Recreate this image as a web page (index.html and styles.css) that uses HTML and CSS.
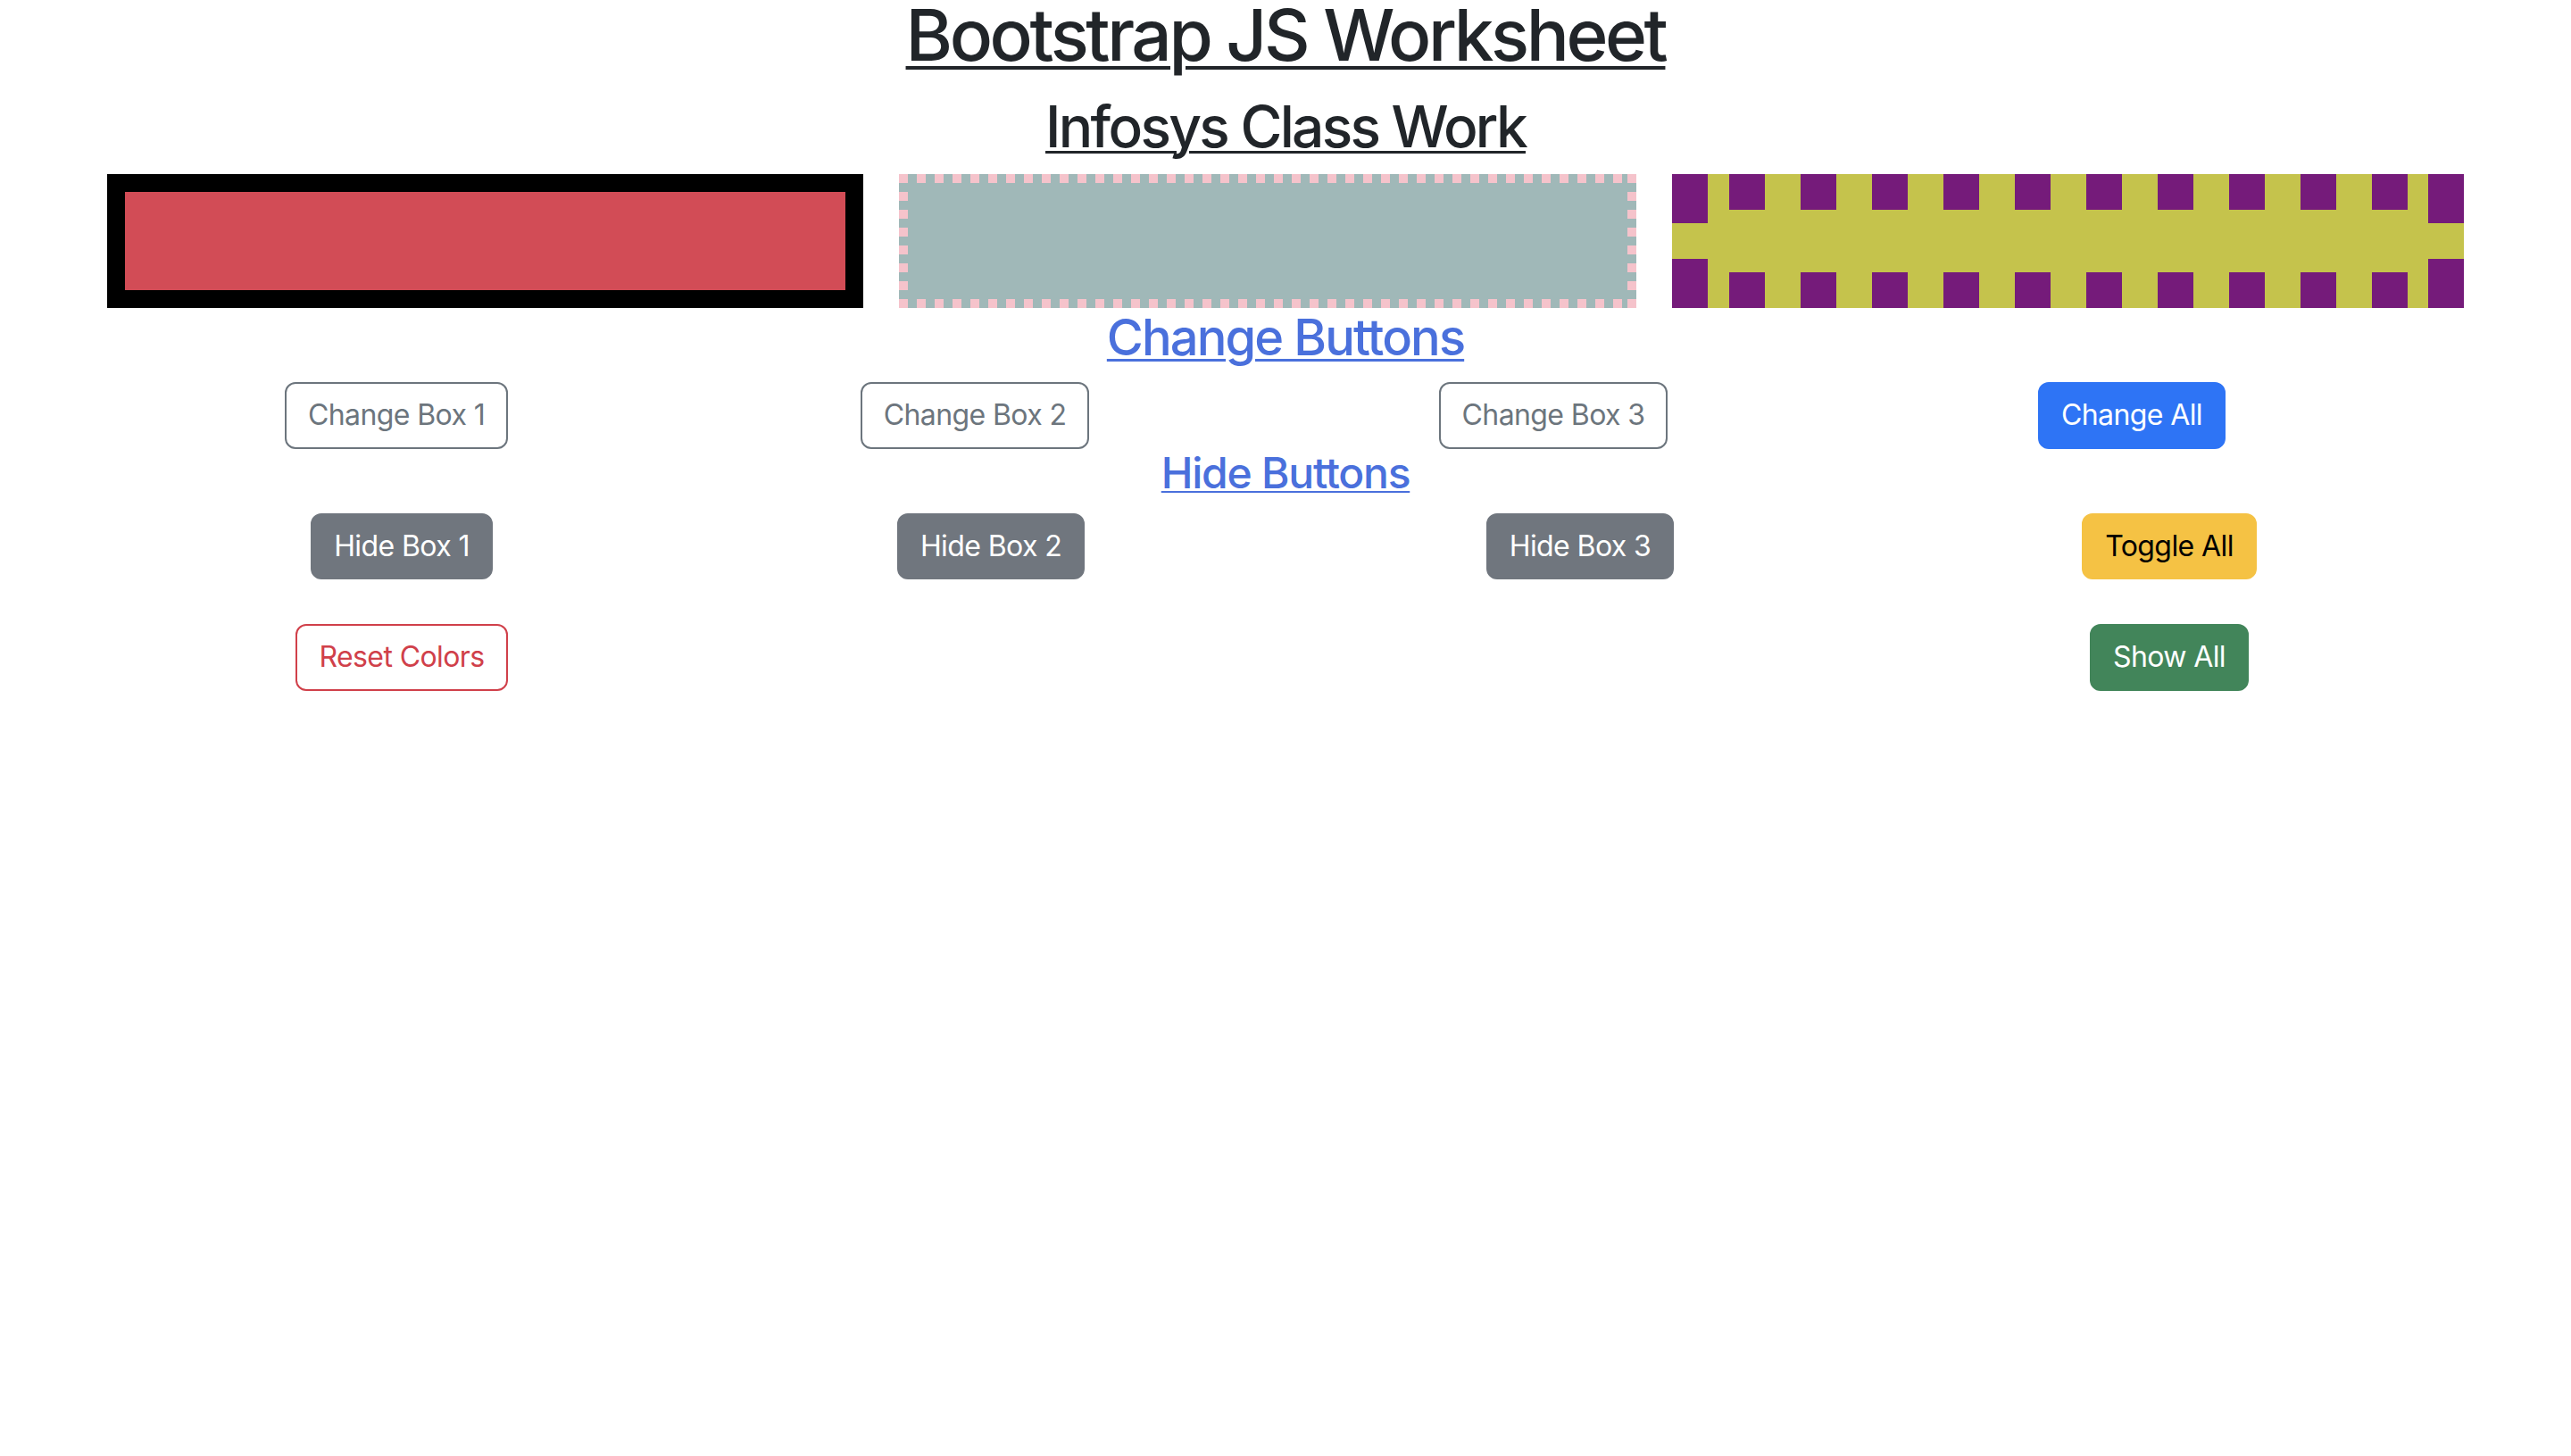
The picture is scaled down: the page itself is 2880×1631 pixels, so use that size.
FILE: index.html
```html
<!DOCTYPE html>
<html lang="en">
<head>
<meta charset="utf-8">
<title>Bootstrap JS Worksheet</title>
<link rel="stylesheet" href="styles.css">
</head>
<body>
<div class="page">
  <h1 class="title"><u>Bootstrap JS Worksheet</u></h1>
  <h2 class="subtitle"><u>Infosys Class Work</u></h2>
  <div class="boxes">
    <div class="box box-one"></div>
    <div class="box box-two"></div>
    <div class="box box-three"></div>
  </div>
  <h3 class="section-title"><a href="#" class="section-link">Change Buttons</a></h3>
  <div class="btn-row row-narrow">
    <div class="cell"><button class="btn btn-outline-secondary">Change Box 1</button></div>
    <div class="cell"><button class="btn btn-outline-secondary">Change Box 2</button></div>
    <div class="cell"><button class="btn btn-outline-secondary">Change Box 3</button></div>
    <div class="cell"><button class="btn btn-primary">Change All</button></div>
  </div>
  <h4 class="section-title section-title-sm"><a href="#" class="section-link">Hide Buttons</a></h4>
  <div class="btn-row row-wide">
    <div class="cell"><button class="btn btn-secondary">Hide Box 1</button></div>
    <div class="cell"><button class="btn btn-secondary">Hide Box 2</button></div>
    <div class="cell"><button class="btn btn-secondary">Hide Box 3</button></div>
    <div class="cell"><button class="btn btn-warning">Toggle All</button></div>
  </div>
  <div class="btn-row row-wide row-spaced">
    <div class="cell"><button class="btn btn-outline-danger">Reset Colors</button></div>
    <div class="cell"></div>
    <div class="cell"></div>
    <div class="cell"><button class="btn btn-success">Show All</button></div>
  </div>
</div>
</body>
</html>
```

FILE: styles.css
```css
*, *::before, *::after { box-sizing: border-box; }

html, body {
  margin: 0;
  padding: 0;
  background: #ffffff;
}

body {
  font-family: Inter, "Noto Sans", "Liberation Sans", sans-serif;
  color: #212529;
  font-size: 32px;
  line-height: 1.5;
}

.page {
  padding: 0 120px;
}

.title, .subtitle, .section-title {
  margin: 0 0 16px 0;
  text-align: center;
  font-weight: 500;
  line-height: 1.2;
  color: #212529;
}

.title u, .subtitle u, .section-link {
  text-decoration: underline;
  text-decoration-thickness: 0.05em;
  text-underline-offset: 0.07em;
}

.title {
  font-size: 80px;
  line-height: 78px;
  margin-bottom: 24px;
  letter-spacing: -3.4px;
}

.subtitle {
  font-size: 64px;
  padding-top: 2px;
  margin-bottom: 14px;
  letter-spacing: -2.7px;
}

.section-title {
  font-size: 56px;
  letter-spacing: -1.9px;
}

.section-title-sm {
  font-size: 48px;
  line-height: 54px;
  margin-bottom: 18px;
  letter-spacing: -1.25px;
}

.section-link {
  color: #4a70dc;
}

.boxes {
  display: flex;
  gap: 40px;
}

.box {
  flex: 1 1 0;
  height: 150px;
  background-origin: border-box;
  background-repeat: no-repeat;
}

.box-one {
  background-color: #d24c56;
  border: 20px solid #000000;
}

.box-two {
  border: 10px solid transparent;
  background-color: #a0b8b8;
  background-image:
    repeating-linear-gradient(90deg, #f5c3cb 0 10px, transparent 10px 20px),
    repeating-linear-gradient(90deg, #f5c3cb 0 10px, transparent 10px 20px),
    repeating-linear-gradient(180deg, #f5c3cb 0 10px, transparent 10px 20px),
    repeating-linear-gradient(180deg, #f5c3cb 0 10px, transparent 10px 20px);
  background-size: 100% 10px, 100% 10px, 10px 100%, 10px 100%;
  background-position: left top, left bottom, left top, right top;
}

.box-three {
  border: 40px solid transparent;
  background-color: #c5c34c;
  background-image:
    repeating-linear-gradient(90deg, #751b7a 0 40px, transparent 40px 80px),
    repeating-linear-gradient(90deg, #751b7a 0 40px, transparent 40px 80px),
    linear-gradient(180deg, #751b7a 0 calc(50% - 20px), transparent calc(50% - 20px) calc(50% + 20px), #751b7a calc(50% + 20px)),
    linear-gradient(180deg, #751b7a 0 calc(50% - 20px), transparent calc(50% - 20px) calc(50% + 20px), #751b7a calc(50% + 20px));
  background-size: 760px 40px, 760px 40px, 40px 100%, 40px 100%;
  background-position: center top, center bottom, left top, right top;
}

.btn-row {
  display: grid;
  grid-template-columns: repeat(4, 1fr);
}

.row-narrow {
  grid-template-columns: repeat(4, 648px);
}

.row-spaced {
  margin-top: 50px;
}

.cell {
  display: flex;
  justify-content: center;
}

.btn {
  font-family: Inter, "Noto Sans", "Liberation Sans", sans-serif;
  font-size: 32px;
  line-height: 46.6px;
  font-weight: 400;
  letter-spacing: -0.6px;
  padding: 12px 24px;
  border: 2px solid transparent;
  border-radius: 12px;
  background: transparent;
  cursor: pointer;
}

.btn-outline-secondary {
  color: #6c757d;
  border-color: #6c757d;
  background: #ffffff;
}

.btn-primary {
  color: #ffffff;
  background: #2e74f5;
  border-color: #2e74f5;
}

.btn-secondary {
  color: #ffffff;
  background: #70767e;
  border-color: #70767e;
}

.btn-warning {
  color: #000000;
  background: #f5c244;
  border-color: #f5c244;
}

.btn-outline-danger {
  color: #d0404a;
  border-color: #d0404a;
  background: #ffffff;
}

.btn-success {
  color: #ffffff;
  background: #42855a;
  border-color: #42855a;
}
```
